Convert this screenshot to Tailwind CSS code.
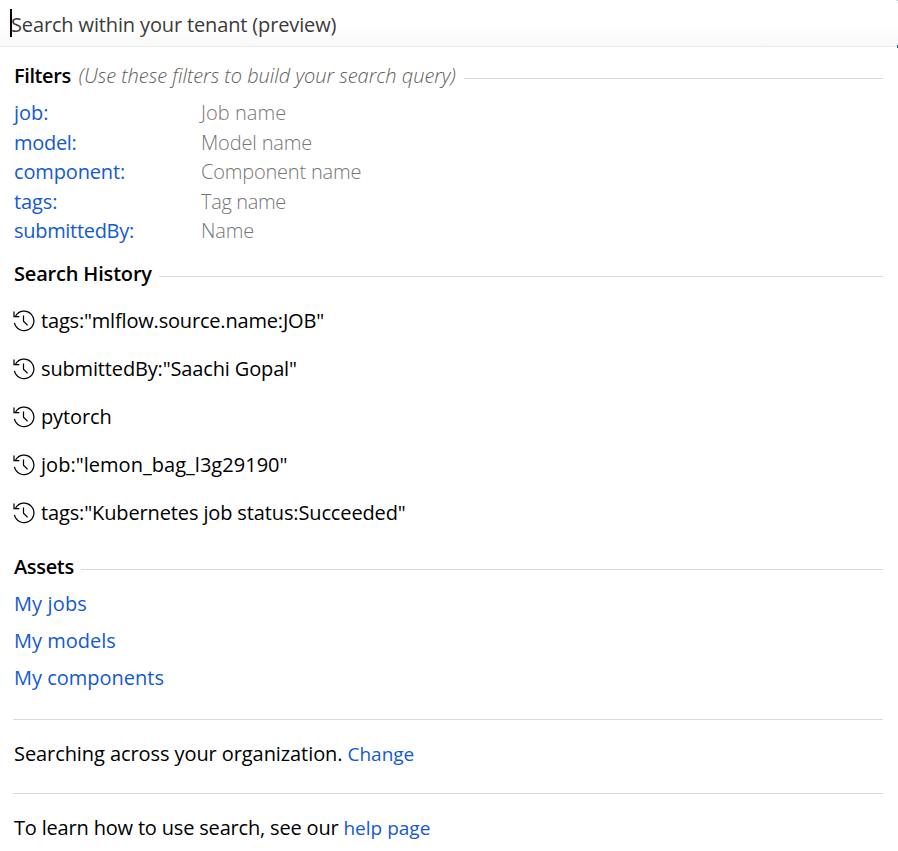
<!DOCTYPE html>
<html lang="en">
<head>
<meta charset="utf-8">
<title>Search</title>
<script src="https://cdn.jsdelivr.net/npm/@tailwindcss/browser@4"></script>
</head>
<body class="bg-white text-black text-[20px] leading-[30px] font-['Open_Sans','Noto_Sans',sans-serif] whitespace-nowrap overflow-hidden">
<svg class="hidden">
  <symbol id="history" viewBox="0 0 22 22">
    <path d="M1.5 12.8A9.8 9.8 0 1 0 2.6 6M1 1.4V6.5H6.4M10.5 5.5V11.3L14.6 15.4" fill="none" stroke="currentColor" stroke-width="1.25"/>
  </symbol>
</svg>
<header class="relative h-[47px] pt-[9px] pl-[10px] flex items-start border-b border-[#ececec] bg-linear-to-b from-white from-60% to-[#f8f8f8]">
  <span class="w-[2px] h-[28px] bg-black -mr-[1px]"></span>
  <span class="mt-px text-[#3b3a39] tracking-[-0.14px]">Search within your tenant (preview)</span>
  <span class="absolute right-0 top-0 w-px h-px bg-[#7fb4e4]"></span>
  <span class="absolute right-0 top-[45px] w-px h-[3px] bg-[#0f6cbd]"></span>
</header>
<main class="pl-[13px] pr-[15px]">
  <section class="pt-[14px]">
    <div class="flex items-center h-[30px]">
      <h2 class="font-semibold tracking-[-0.4px] ml-px">Filters</h2>
      <span class="italic font-light text-[#605e5c] ml-[8px] tracking-[-0.02px]">(Use these filters to build your search query)</span>
      <span class="flex-1 h-px bg-[#d8d8d8] ml-[8px] mt-[5px]"></span>
    </div>
    <dl class="mt-[7px] ml-px grid grid-cols-[187px_1fr] auto-rows-[29.5px] tracking-[-0.3px]">
      <dt class="text-[#1459d4] tracking-normal">job:</dt><dd class="font-light text-[#767676] tracking-[0.05px]">Job name</dd>
      <dt class="text-[#1459d4]">model:</dt><dd class="font-light text-[#767676] tracking-[-0.15px]">Model name</dd>
      <dt class="text-[#1459d4] tracking-[-0.15px]">component:</dt><dd class="font-light text-[#767676] tracking-[-0.2px]">Component name</dd>
      <dt class="text-[#1459d4] tracking-[-0.1px]">tags:</dt><dd class="font-light text-[#767676] tracking-[-0.35px]">Tag name</dd>
      <dt class="text-[#1459d4]">submittedBy:</dt><dd class="font-light text-[#767676] tracking-[-0.15px]">Name</dd>
    </dl>
  </section>
  <section class="mt-[13px]">
    <div class="flex items-center h-[30px]">
      <h2 class="font-semibold tracking-[-0.18px] ml-px">Search History</h2>
      <span class="flex-1 h-px bg-[#d8d8d8] ml-[7px] mt-[5px]"></span>
    </div>
    <ul class="mt-[8px]">
      <li class="flex items-center h-[48px]"><svg class="w-[22px] h-[22px] mr-[6px]"><use href="#history"/></svg><span class="tracking-[-0.18px]">tags:"mlflow.source.name:JOB"</span></li>
      <li class="flex items-center h-[48px]"><svg class="w-[22px] h-[22px] mr-[6px]"><use href="#history"/></svg><span class="tracking-[-0.15px]">submittedBy:"Saachi Gopal"</span></li>
      <li class="flex items-center h-[48px]"><svg class="w-[22px] h-[22px] mr-[6px]"><use href="#history"/></svg><span class="tracking-[-0.12px]">pytorch</span></li>
      <li class="flex items-center h-[48px]"><svg class="w-[22px] h-[22px] mr-[6px]"><use href="#history"/></svg><span class="tracking-[0.03px]">job:"lemon_bag_l3g29190"</span></li>
      <li class="flex items-center h-[48px]"><svg class="w-[22px] h-[22px] mr-[6px]"><use href="#history"/></svg><span class="tracking-[-0.13px]">tags:"Kubernetes job status:Succeeded"</span></li>
    </ul>
  </section>
  <section class="mt-[15px]">
    <div class="flex items-center h-[30px]">
      <h2 class="font-semibold tracking-[-0.35px] ml-px">Assets</h2>
      <span class="flex-1 h-px bg-[#d8d8d8] ml-[7px] mt-[5px]"></span>
    </div>
    <ul class="mt-[3px] ml-px text-[#1459d4]">
      <li class="h-[37px] leading-[37px] tracking-[0.12px]">My jobs</li>
      <li class="h-[37px] leading-[37px]">My models</li>
      <li class="h-[37px] leading-[37px]">My components</li>
    </ul>
  </section>
  <p class="mt-[23px] h-[74px] pt-[19px] pl-px border-t border-[#d8d8d8] flex items-baseline"><span class="tracking-[-0.08px]">Searching across your organization.</span><a class="text-[#1459d4] text-[19px] ml-[5px]">Change</a></p>
  <p class="h-[58px] pt-[19px] pl-px border-t border-[#d8d8d8] flex items-baseline"><span class="tracking-[-0.18px]">To learn how to use search, see our</span><a class="text-[#1459d4] text-[19px] ml-[5px]">help page</a></p>
</main>
</body>
</html>
